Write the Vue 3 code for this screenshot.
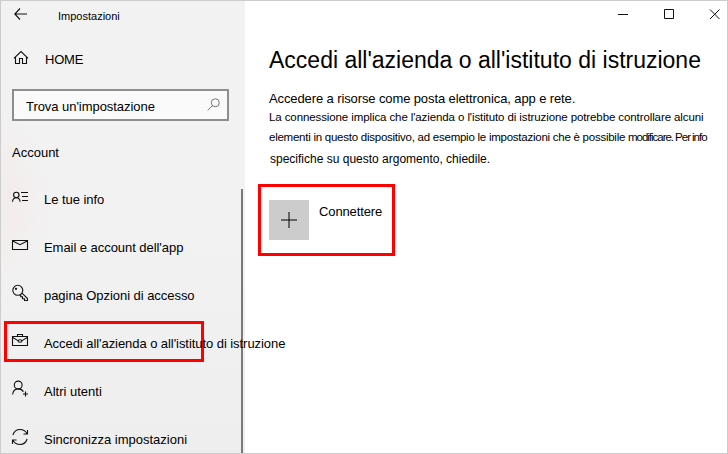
<script setup>
import { ref } from 'vue'

const search = ref("Trova un'impostazione")
const selected = ref('work')

const items = [
  { id: 'info', label: 'Le tue info' },
  { id: 'email', label: "Email e account dell'app" },
  { id: 'signin', label: 'pagina Opzioni di accesso' },
  { id: 'work', label: "Accedi all'azienda o all'istituto di istruzione" },
  { id: 'users', label: 'Altri utenti' },
  { id: 'sync', label: 'Sincronizza impostazioni' },
]
</script>

<template>
  <div class="window">
    <aside class="sidebar">
      <header class="titlebar">
        <svg class="back" width="14" height="12" viewBox="0 0 14 12">
          <path d="M6 .5.8 6 6 11.500M1 6H13" />
        </svg>
        <span>Impostazioni</span>
      </header>

      <div class="home">
        <svg width="16" height="16" viewBox="0 0 16 16">
          <path d="M.9 7.300 8 .6 15.100 7.300M2.500 6V12.500H6.500V7.500H9.500V12.500H13.500V6" />
        </svg>
        <span>HOME</span>
      </div>

      <div class="search">
        <span>{{ search }}</span>
        <svg width="13" height="13" viewBox="0 0 13 13">
          <circle cx="8.300" cy="4.800" r="4" />
          <path d="M5.500 7.600.8 12.300" />
        </svg>
      </div>

      <h2>Account</h2>

      <nav>
        <a
          v-for="item in items"
          :key="item.id"
          :class="['item', item.id, { selected: item.id === selected }]"
          @click="selected = item.id"
        >
          <svg width="18" height="18" viewBox="0 0 18 18">
            <g v-if="item.id === 'info'">
              <circle cx="4.300" cy="7" r="2.700" />
              <path d="M.5 13.800C.7 11.200 2.200 9.700 4.300 9.700S7.900 11.200 8.100 13.800M9 4.500H16M10 8.500H16M10 12.500H16" />
            </g>
            <g v-else-if="item.id === 'email'">
              <path d="M.5 4.500H15.500V13.500H.5ZM.8 5 8 8.700 15.200 5" />
            </g>
            <g v-else-if="item.id === 'signin'">
              <circle cx="5.800" cy="6.300" r="5" />
              <circle cx="4" cy="4.800" r=".6" />
              <path d="M10 9.200 15.500 14.500V16.500H12.500V14.700H10.500V12.800H8.700V11.200L7.700 10.800" />
            </g>
            <g v-else-if="item.id === 'work'">
              <path d="M.5 4.500H15.500V13.500H.5ZM5.500 4.500V2.500H10.500V4.500M.8 5.500 6 8.600M10 8.600 15.200 5.500" />
              <ellipse cx="8" cy="9" rx="2" ry="1.200" />
            </g>
            <g v-else-if="item.id === 'users'">
              <circle cx="6.200" cy="5" r="3.900" />
              <path d="M.6 14.500C1 11 3.300 8.900 6.200 8.900 8.700 8.900 10.500 10 11.400 11.700M13.500 11.500V16.500M11 14H16" />
            </g>
            <g v-else>
              <path d="M.9 7C2 3.500 4.500 1.500 8 1.500 11 1.500 13.500 3 15 5.500M15.500 2V6H11.500M15.100 11C14 14.500 11.500 16.500 8 16.500 5 16.500 2.500 15 1 12.500M.5 16V12H4.500" />
            </g>
          </svg>
          <span>{{ item.label }}</span>
        </a>
      </nav>
      <div class="scrollbar"></div>
    </aside>

    <main>
      <div class="controls">
        <svg width="11" height="11" viewBox="0 0 11 11"><path d="M1 5.500H11" /></svg>
        <svg width="11" height="11" viewBox="0 0 11 11"><path d="M1.500.500H10.500V9.500H1.500Z" /></svg>
        <svg width="11" height="11" viewBox="0 0 11 11"><path d="M1 .500 10.500 10M10.500.500 1 10" /></svg>
      </div>
      <h1>Accedi all'azienda o all'istituto di istruzione</h1>
      <p class="lead">Accedere a risorse come posta elettronica, app e rete.</p>
      <div class="description">
        <p class="line-a">La connessione implica che l'azienda o l'istituto di istruzione potrebbe controllare alcuni</p>
        <p class="line-b">elementi in questo dispositivo, ad esempio le impostazioni che è possibile <span>modificare. Per info</span></p>
        <p class="line-c">specifiche su questo argomento, chiedile.</p>
      </div>
      <button class="connect" type="button">
        <span class="plus">
          <svg width="16" height="16" viewBox="0 0 16 16">
            <path d="M8 0V16" />
            <path d="M0 8H16" />
          </svg>
        </span>
        <span class="connect-label">Connettere</span>
      </button>
    </main>
  </div>
</template>

<style>
body {
  margin: 0;
}
</style>

<style scoped>
.window {
  box-sizing: border-box;
  display: flex;
  width: 728px;
  height: 454px;
  overflow: hidden;
  border: 1px solid #ccc;
  background: #fff;
  color: #000;
  font: 13px/20px 'Liberation Sans', Arial, sans-serif;
}

h1,
h2,
p {
  margin: 0;
  font-weight: 400;
  white-space: nowrap;
}

svg {
  display: block;
  flex: none;
  overflow: visible;
  fill: none;
  stroke: #111;
  stroke-width: 1.1;
}

.sidebar {
  position: relative;
  z-index: 1;
  flex: none;
  width: 244px;
  background:
    radial-gradient(ellipse 50px 90px at 0 200px, #f4ebeb, transparent),
    linear-gradient(#f2f2f2 50%, #eee);
}

.titlebar {
  display: flex;
  align-items: center;
  gap: 30px;
  height: 26px;
  padding-left: 13px;
  font-size: 11px;
}

.titlebar span {
  padding-top: 4px;
}

.home {
  display: flex;
  align-items: center;
  gap: 16px;
  height: 20px;
  margin-top: 22px;
  padding-left: 12px;
}

.home span {
  padding-top: 2px;
  letter-spacing: -0.2px;
}

.search {
  box-sizing: border-box;
  display: flex;
  align-items: center;
  justify-content: space-between;
  width: 217px;
  height: 32px;
  margin: 20px 0 0 11px;
  padding: 3px 7px 0 12px;
  border: 2px solid #8e8e8e;
  background: #fafafa;
}

.search span {
  letter-spacing: -0.05px;
}

.search svg {
  margin-top: -4px;
  stroke: #777;
  stroke-width: 1;
}

h2 {
  margin: 22px 0 0 11px;
  font-size: 13px;
}

nav {
  margin-top: 11px;
}

.item {
  box-sizing: border-box;
  display: flex;
  gap: 14px;
  height: 48px;
  padding: 15px 0 0 11px;
  white-space: nowrap;
  cursor: default;
}

.item svg {
  margin-top: -1px;
}

.item span {
  position: relative;
  padding-top: 1px;
}

.info span,
.email span,
.signin span {
  letter-spacing: -0.05px;
}

.selected {
  width: 200px;
  height: 41px;
  margin: 3px 0 4px 3px;
  padding: 9px 0 0 5px;
  border: 3px solid #f00;
}

.selected span {
  letter-spacing: -0.06px;
}

.scrollbar {
  position: absolute;
  z-index: -1;
  top: 188px;
  right: 2px;
  bottom: 0;
  width: 2px;
  background: #7a7a7a;
}

main {
  flex: 1;
  padding-left: 24px;
}

.controls {
  display: flex;
  justify-content: flex-end;
  gap: 35px;
  height: 36px;
  padding: 8px 7px 0 0;
  box-sizing: border-box;
}

.controls svg {
  stroke-width: 1;
}

h1 {
  margin-top: 8px;
  font-size: 23px;
  line-height: 30px;
}

.lead {
  margin-top: 14px;
  letter-spacing: -0.11px;
}

.description {
  font-size: 11.5px;
}

.line-a {
  margin-top: -2px;
  letter-spacing: -0.1px;
}

.line-b {
  letter-spacing: -0.25px;
}

.line-b span {
  letter-spacing: -1.03px;
}

.line-c {
  margin-top: 2px;
  padding-left: 1px;
  font-size: 12px;
}

.connect {
  box-sizing: border-box;
  display: flex;
  gap: 10px;
  width: 137px;
  height: 72px;
  margin: 15px 0 0 -11px;
  padding: 13px 8px;
  border: 3px solid #f00;
  background: none;
  color: inherit;
  font: inherit;
}

.plus {
  display: grid;
  place-items: center;
  width: 40px;
  height: 40px;
  background: #ccc;
}

.plus svg {
  stroke: rgba(0, 0, 0, 0.5);
  stroke-width: 2;
}

.connect-label {
  padding-top: 2px;
  letter-spacing: -0.12px;
}
</style>
